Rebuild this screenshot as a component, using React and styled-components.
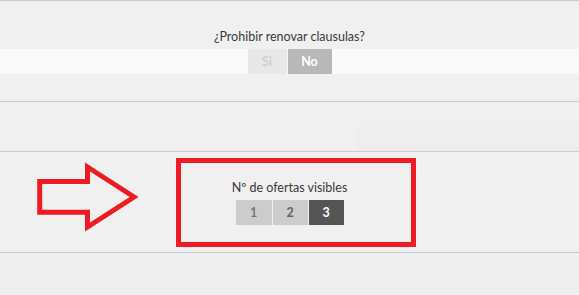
import React, { useState } from "react";
import styled, { createGlobalStyle } from "styled-components";

const Global = createGlobalStyle`
  html, body { margin: 0; padding: 0; background: #f0f0f0; }
  body { font-family: "Lato", "Open Sans", sans-serif; }
`;

const Page = styled.div`
  position: relative;
  width: 579px;
  height: 295px;
  overflow: hidden;
  background: #efefef;
  border-top: 1px solid #cccccc;
  box-sizing: border-box;
`;

const Section = styled.section`
  height: ${(p) => p.$h}px;
  border-bottom: 1px solid #cccccc;
  background: #f0f0f0;
  display: flex;
  flex-direction: column;
  align-items: ${(p) => (p.$stretch ? "stretch" : "center")};
  justify-content: ${(p) => (p.$end ? "flex-end" : "flex-start")};
  padding-top: ${(p) => p.$pt || 0}px;
  box-sizing: border-box;
`;

const Label = styled.div`
  font-size: 12.5px;
  line-height: 16px;
  color: #3a3a3a;
  text-align: center;
  margin-bottom: 4px;
`;

const Band = styled.div`
  align-self: stretch;
  display: flex;
  justify-content: center;
  background: #f9f9f9;
  height: 25px;
`;

const Group = styled.div`
  display: flex;
  gap: 1px;
  justify-content: center;
`;

const Toggle = styled.button`
  border: none;
  margin: 0;
  padding: 0;
  width: ${(p) => p.$w}px;
  height: 25px;
  font-family: "Lato", "Open Sans", sans-serif;
  font-weight: 700;
  font-size: 12.5px;
  cursor: pointer;
  background: ${(p) => p.$bg};
  color: ${(p) => p.$fg};
`;

const FieldGhost = styled.div`
  align-self: flex-end;
  width: 223px;
  height: 25px;
  background: #eeeeee;
`;

const Overlay = styled.svg`
  position: absolute;
  left: 0;
  top: 0;
  pointer-events: none;
`;

export default function App() {
  const [renew, setRenew] = useState("No");
  const [offers, setOffers] = useState(3);
  const offerStyle = (n) =>
    n === offers ? { bg: "#555555", fg: "#ffffff" } : { bg: "#cccccc", fg: n === 1 ? "#777777" : "#636363" };
  return (
    <>
      <Global />
      <Page>
        <Section $h={101} $pt={28}>
          <Label>¿Prohibir renovar clausulas?</Label>
          <Band>
            <Group>
              <Toggle
                $w={39}
                $bg={renew === "Si" ? "#b8b8b8" : "#e8e8e8"}
                $fg={renew === "Si" ? "#ffffff" : "#d0d0d0"}
                onClick={() => setRenew("Si")}
              >
                Si
              </Toggle>
              <Toggle
                $w={44}
                $bg={renew === "No" ? "#b8b8b8" : "#e8e8e8"}
                $fg={renew === "No" ? "#ffffff" : "#d0d0d0"}
                onClick={() => setRenew("No")}
              >
                No
              </Toggle>
            </Group>
          </Band>
        </Section>
        <Section $h={50} $end $stretch>
          <FieldGhost />
        </Section>
        <Section $h={101} $pt={28}>
          <Label>Nº de ofertas visibles</Label>
          <Group>
            {[1, 2, 3].map((n) => {
              const s = offerStyle(n);
              return (
                <Toggle key={n} $w={n === 1 ? 36 : 35} $bg={s.bg} $fg={s.fg} onClick={() => setOffers(n)}>
                  {n}
                </Toggle>
              );
            })}
          </Group>
        </Section>
        <Overlay width="579" height="295" viewBox="0 0 579 295">
          <rect x="178.5" y="159.5" width="235" height="84" fill="none" stroke="#ed1c24" strokeWidth="5" />
          <polygon
            points="39.7,180.5 87.5,180.5 87.5,166 134,196 87.5,226 87.5,211.3 39.7,211.3"
            fill="none"
            stroke="#ed1c24"
            strokeWidth="5"
            strokeLinejoin="miter"
          />
        </Overlay>
      </Page>
    </>
  );
}
